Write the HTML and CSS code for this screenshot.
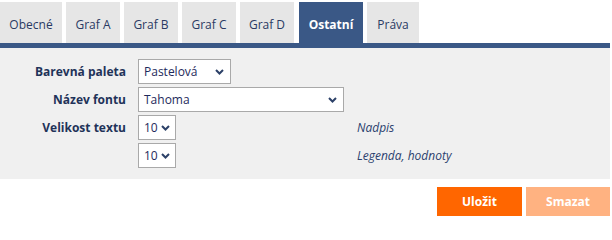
FILE: index.html
```html
<!DOCTYPE html>
<html lang="cs">
<head>
<meta charset="utf-8">
<title>Nastavení grafu</title>
<link rel="stylesheet" href="styles.css">
</head>
<body>
<div class="page">
  <nav class="tabs">
    <div class="tab t-obecne">Obecné</div>
    <div class="tab t-graf">Graf A</div>
    <div class="tab t-graf">Graf B</div>
    <div class="tab t-graf">Graf C</div>
    <div class="tab t-graf">Graf D</div>
    <div class="tab active t-ostatni">Ostatní</div>
    <div class="tab t-prava">Práva</div>
  </nav>
  <div class="bar"></div>
  <section class="panel">
    <div class="form">
      <label class="lbl">Barevná paleta</label>
      <div class="select s-paleta"><span>Pastelová</span><svg class="chev" width="9" height="6" viewBox="0 0 9 6"><path d="M1 1 L4.5 4.5 L8 1" fill="none" stroke="#2c4168" stroke-width="2"/></svg></div>
      <div class="note"></div>

      <label class="lbl">Název fontu</label>
      <div class="select s-font"><span>Tahoma</span><svg class="chev" width="9" height="6" viewBox="0 0 9 6"><path d="M1 1 L4.5 4.5 L8 1" fill="none" stroke="#2c4168" stroke-width="2"/></svg></div>
      <div class="note"></div>

      <label class="lbl">Velikost textu</label>
      <div class="select s-size"><span>10</span><svg class="chev" width="9" height="6" viewBox="0 0 9 6"><path d="M1 1 L4.5 4.5 L8 1" fill="none" stroke="#2c4168" stroke-width="2"/></svg></div>
      <div class="note">Nadpis</div>

      <div class="lbl"></div>
      <div class="select s-size"><span>10</span><svg class="chev" width="9" height="6" viewBox="0 0 9 6"><path d="M1 1 L4.5 4.5 L8 1" fill="none" stroke="#2c4168" stroke-width="2"/></svg></div>
      <div class="note">Legenda, hodnoty</div>
    </div>
  </section>
  <div class="actions">
    <button class="btn btn-save">Uložit</button>
    <button class="btn btn-delete">Smazat</button>
  </div>
</div>
</body>
</html>
```

FILE: styles.css
```css
* { box-sizing: border-box; }
html, body { margin: 0; padding: 0; background: #ffffff; }
body {
  font-family: "Open Sans", "Liberation Sans", sans-serif;
  font-size: 12px;
  color: #1f2f55;
}
.page { width: 610px; }

.tabs {
  display: flex;
  gap: 4px;
  padding-top: 2px;
  height: 43px;
}
.tab {
  height: 41px;
  background: #e6e6e6;
  color: #2a3a63;
  display: flex;
  align-items: center;
  justify-content: center;
  padding-top: 3px;
  font-size: 12px;
}
.t-obecne { width: 62px; }
.t-graf { width: 54px; }
.t-ostatni { width: 64px; margin-left: 1px; }
.t-prava { width: 52px; }
.tab.active {
  background: #3a5886;
  color: #ffffff;
  font-weight: 700;
}
.bar { height: 5px; background: #3a5886; }

.panel {
  background: #f0f0f0;
  padding: 11px 0 11px 0;
}
.form {
  display: grid;
  grid-template-columns: 126px 206px 1fr;
  column-gap: 12px;
  row-gap: 3px;
  align-items: center;
}
.form .note { margin-left: 1px; }
.lbl {
  text-align: right;
  font-weight: 700;
  font-size: 12px;
  color: #1f3359;
}
.select {
  height: 25px;
  background: #ffffff;
  border: 1px solid #a9a9a9;
  display: flex;
  align-items: center;
  justify-content: space-between;
  padding: 0 6px 0 5px;
  color: #1e2a5c;
  font-size: 12px;
}
.s-paleta { width: 93px; }
.s-font { width: 206px; }
.s-size { width: 38px; padding-right: 5px; }
.chev { display: block; }
.note {
  font-style: italic;
  color: #2b3f6e;
  font-size: 12px;
}

.actions {
  display: flex;
  justify-content: flex-end;
  gap: 4px;
  margin-top: 8px;
}
.btn {
  border: 0;
  height: 29px;
  width: 85px;
  font-family: "Open Sans", "Liberation Sans", sans-serif;
  font-size: 12px;
  font-weight: 700;
  color: #ffffff;
  padding: 0;
}
.btn-save { background: #ff6600; }
.btn-delete { background: #ffb281; width: 84px; }
```
